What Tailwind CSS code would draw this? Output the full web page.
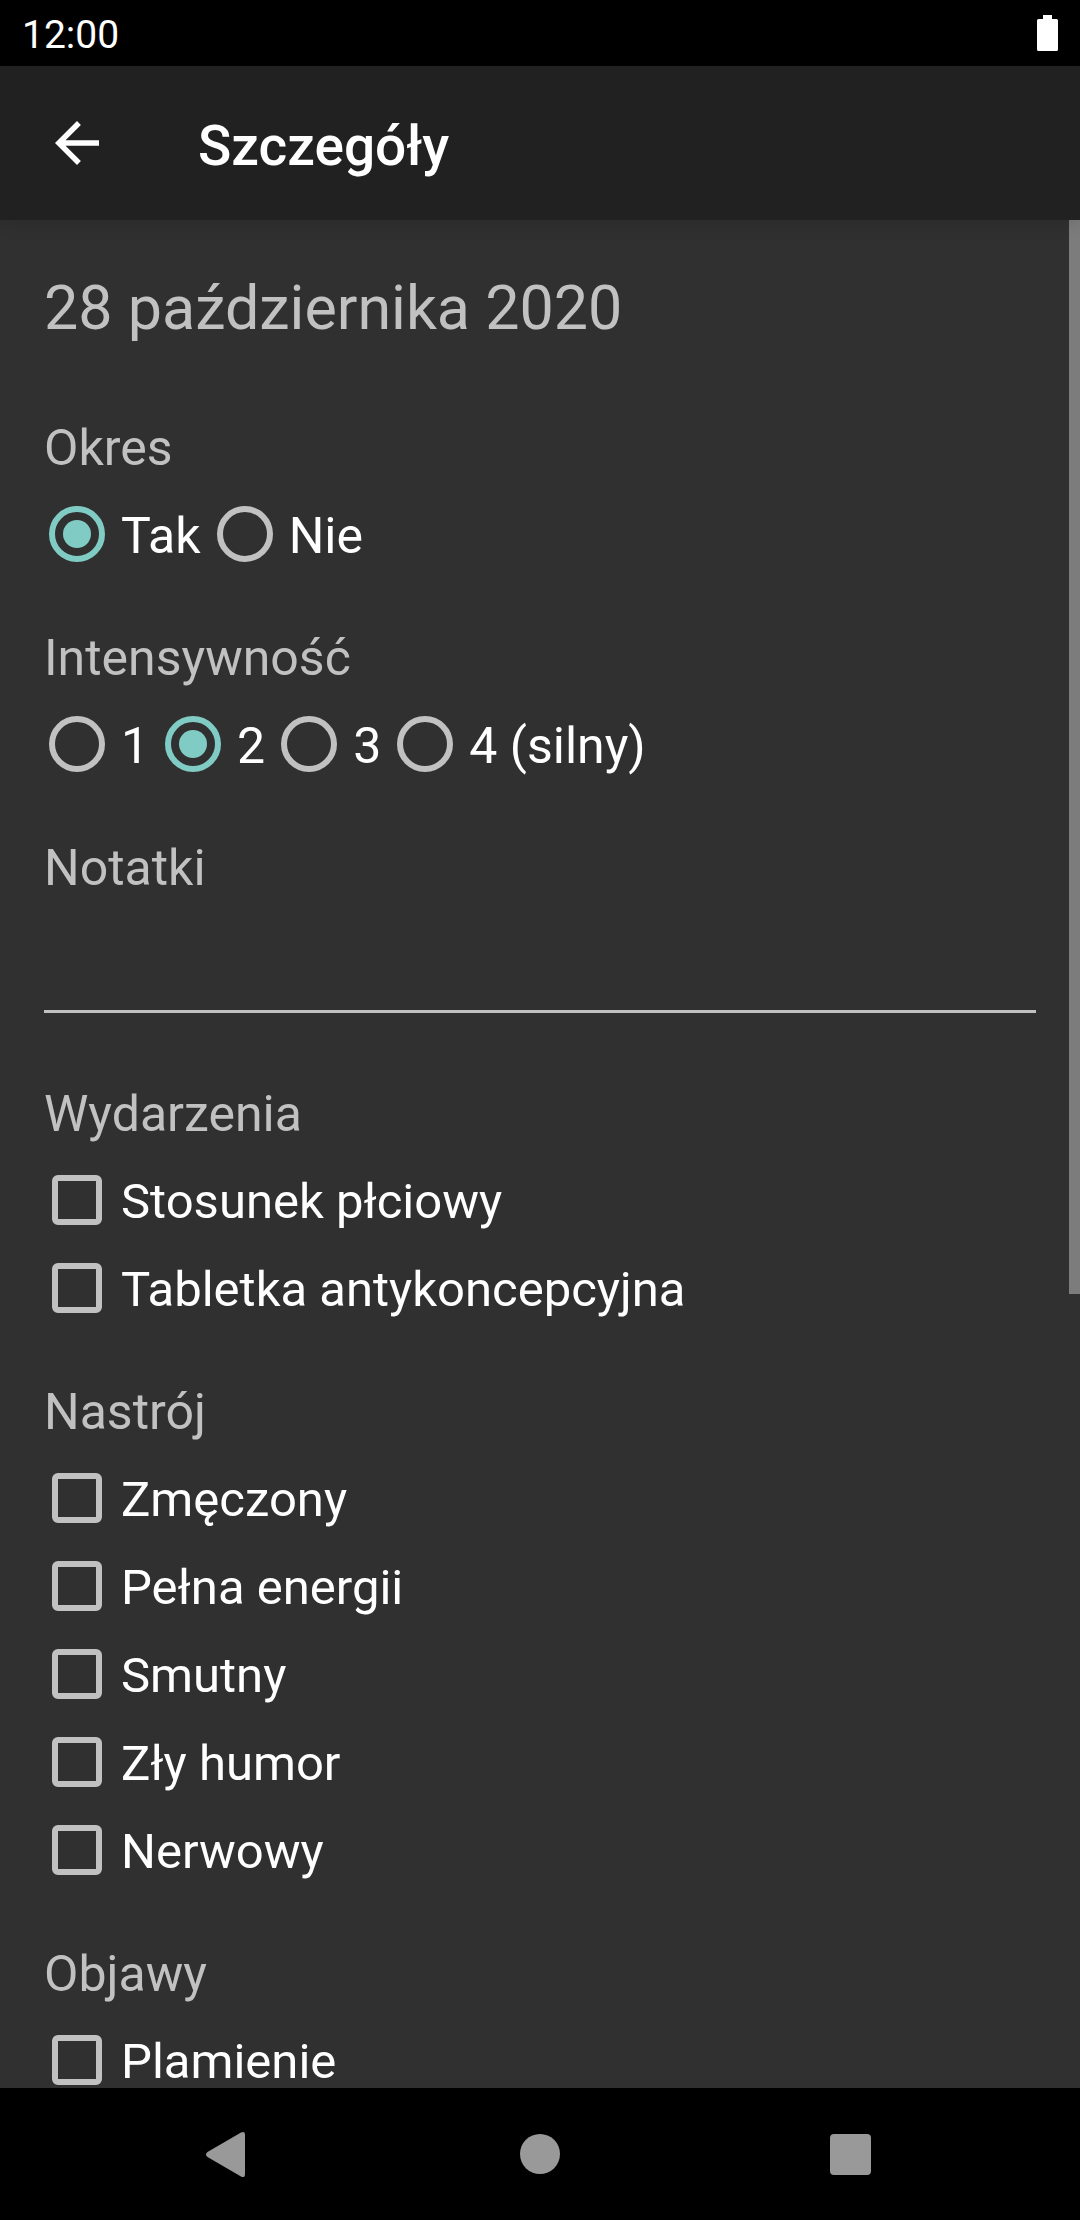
<!DOCTYPE html>
<html lang="pl">
<head>
<meta charset="utf-8">
<meta name="viewport" content="width=device-width, initial-scale=1">
<title>Szczegóły</title>
<script src="https://cdn.jsdelivr.net/npm/@tailwindcss/browser@4"></script>
</head>
<body class="flex h-screen flex-col overflow-hidden bg-[#303030] font-[Roboto,sans-serif] text-[50px] leading-[60px] text-white">

  <!-- Status bar -->
  <div class="flex h-[66px] shrink-0 items-center justify-between bg-black px-[22px]">
    <span class="pt-1 text-[39px] leading-[46px]">12:00</span>
    <svg class="h-9 w-[21px]" viewBox="0 0 21 36" fill="#fff" aria-hidden="true"><path d="M6 0h9v4h4.500a1.500 1.500 0 0 1 1.500 1.500v29a1.500 1.500 0 0 1-1.500 1.500h-18a1.500 1.500 0 0 1-1.500-1.500v-29a1.500 1.500 0 0 1 1.500-1.500h4.500z"/></svg>
  </div>

  <!-- App bar -->
  <header class="z-10 flex h-[154px] shrink-0 items-center gap-[88px] bg-[#212121] px-11 shadow-[0_4px_16px_rgba(0,0,0,0.12)]">
    <button type="button" aria-label="Wstecz">
      <svg class="size-[66px]" viewBox="0 0 24 24" fill="#fff" aria-hidden="true"><path d="M20 11H7.830l5.590-5.590L12 4l-8 8 8 8 1.410-1.410L7.830 13H20v-2z"/></svg>
    </button>
    <h1 class="pt-1.5 text-[55px] leading-[66px] font-medium">Szczegóły</h1>
  </header>

  <!-- Entry form -->
  <div class="relative min-h-0 flex-1">
    <main class="h-full overflow-y-auto pt-[52px] [scrollbar-width:none]">
      <form class="flex flex-col gap-[50px]">
        <h2 class="mb-6 px-11 text-[61px] leading-[72px] text-[#c1c1c1]">28 października 2020</h2>

        <fieldset>
          <legend class="mb-3 px-11 text-[#c1c1c1]">Okres</legend>
          <div class="flex pl-[33px]">
            <label class="flex h-[88px] items-center"><input type="radio" name="okres" checked class="mx-4 size-14 appearance-none rounded-full border-[6px] border-[#c1c1c1] bg-clip-content p-2 checked:border-[#80cbc4] checked:bg-[#80cbc4]"><span class="pt-1">Tak</span></label>
            <label class="flex h-[88px] items-center"><input type="radio" name="okres" class="mx-4 size-14 appearance-none rounded-full border-[6px] border-[#c1c1c1] bg-clip-content p-2 checked:border-[#80cbc4] checked:bg-[#80cbc4]"><span class="pt-1">Nie</span></label>
          </div>
        </fieldset>

        <fieldset>
          <legend class="mb-3 px-11 text-[#c1c1c1]">Intensywność</legend>
          <div class="flex pl-[33px]">
            <label class="flex h-[88px] items-center"><input type="radio" name="intensywnosc" class="mx-4 size-14 appearance-none rounded-full border-[6px] border-[#c1c1c1] bg-clip-content p-2 checked:border-[#80cbc4] checked:bg-[#80cbc4]"><span class="pt-1">1</span></label>
            <label class="flex h-[88px] items-center"><input type="radio" name="intensywnosc" checked class="mx-4 size-14 appearance-none rounded-full border-[6px] border-[#c1c1c1] bg-clip-content p-2 checked:border-[#80cbc4] checked:bg-[#80cbc4]"><span class="pt-1">2</span></label>
            <label class="flex h-[88px] items-center"><input type="radio" name="intensywnosc" class="mx-4 size-14 appearance-none rounded-full border-[6px] border-[#c1c1c1] bg-clip-content p-2 checked:border-[#80cbc4] checked:bg-[#80cbc4]"><span class="pt-1">3</span></label>
            <label class="flex h-[88px] items-center"><input type="radio" name="intensywnosc" class="mx-4 size-14 appearance-none rounded-full border-[6px] border-[#c1c1c1] bg-clip-content p-2 checked:border-[#80cbc4] checked:bg-[#80cbc4]"><span class="pt-1">4 (silny)</span></label>
          </div>
        </fieldset>

        <div class="mb-[21px] flex flex-col px-11">
          <label for="notatki" class="text-[#c1c1c1]">Notatki</label>
          <input id="notatki" type="text" class="h-[115px] w-full border-b-[3px] border-[#c1c1c1] bg-transparent outline-none">
        </div>

        <fieldset>
          <legend class="mb-3 px-11 text-[#c1c1c1]">Wydarzenia</legend>
          <div class="flex flex-col pl-[33px] text-[49px] leading-[52px]">
            <label class="flex h-[88px] items-center"><input type="checkbox" class="mx-[19px] size-[50px] appearance-none rounded-[6px] border-[6px] border-[#c1c1c1] checked:bg-[#80cbc4]"><span class="pt-1">Stosunek płciowy</span></label>
            <label class="flex h-[88px] items-center"><input type="checkbox" class="mx-[19px] size-[50px] appearance-none rounded-[6px] border-[6px] border-[#c1c1c1] checked:bg-[#80cbc4]"><span class="pt-1">Tabletka antykoncepcyjna</span></label>
          </div>
        </fieldset>

        <fieldset>
          <legend class="mb-3 px-11 text-[#c1c1c1]">Nastrój</legend>
          <div class="flex flex-col pl-[33px] text-[49px] leading-[52px]">
            <label class="flex h-[88px] items-center"><input type="checkbox" class="mx-[19px] size-[50px] appearance-none rounded-[6px] border-[6px] border-[#c1c1c1] checked:bg-[#80cbc4]"><span class="pt-1">Zmęczony</span></label>
            <label class="flex h-[88px] items-center"><input type="checkbox" class="mx-[19px] size-[50px] appearance-none rounded-[6px] border-[6px] border-[#c1c1c1] checked:bg-[#80cbc4]"><span class="pt-1">Pełna energii</span></label>
            <label class="flex h-[88px] items-center"><input type="checkbox" class="mx-[19px] size-[50px] appearance-none rounded-[6px] border-[6px] border-[#c1c1c1] checked:bg-[#80cbc4]"><span class="pt-1">Smutny</span></label>
            <label class="flex h-[88px] items-center"><input type="checkbox" class="mx-[19px] size-[50px] appearance-none rounded-[6px] border-[6px] border-[#c1c1c1] checked:bg-[#80cbc4]"><span class="pt-1">Zły humor</span></label>
            <label class="flex h-[88px] items-center"><input type="checkbox" class="mx-[19px] size-[50px] appearance-none rounded-[6px] border-[6px] border-[#c1c1c1] checked:bg-[#80cbc4]"><span class="pt-1">Nerwowy</span></label>
          </div>
        </fieldset>

        <fieldset>
          <legend class="mb-3 px-11 text-[#c1c1c1]">Objawy</legend>
          <div class="flex flex-col pl-[33px] text-[49px] leading-[52px]">
            <label class="flex h-[88px] items-center"><input type="checkbox" class="mx-[19px] size-[50px] appearance-none rounded-[6px] border-[6px] border-[#c1c1c1] checked:bg-[#80cbc4]"><span class="pt-1">Plamienie</span></label>
          </div>
        </fieldset>
      </form>
    </main>
    <!-- Overlay scroll indicator -->
    <div class="absolute top-0 right-0 h-[57.5%] w-[11px] bg-[#7c7c7c]"></div>
  </div>

  <!-- System navigation -->
  <nav class="flex h-[132px] shrink-0 items-center justify-center bg-black">
    <button type="button" aria-label="Wróć" class="flex w-[28.8%] justify-center"><svg class="size-[66px]" viewBox="0 0 66 66" fill="#999" aria-hidden="true"><path d="M45 11.500Q49 9.500 49 14V53Q49 57.500 45 55.500L11.500 36Q8.500 33.500 11.500 31Z"/></svg></button>
    <button type="button" aria-label="Ekran główny" class="flex w-[28.8%] justify-center"><svg class="size-[66px]" viewBox="0 0 66 66" fill="#999" aria-hidden="true"><circle cx="33" cy="33" r="20"/></svg></button>
    <button type="button" aria-label="Ostatnie" class="flex w-[28.8%] justify-center"><svg class="size-[66px]" viewBox="0 0 66 66" fill="#999" aria-hidden="true"><rect x="12" y="13" width="41" height="41" rx="4"/></svg></button>
  </nav>
</body>
</html>
